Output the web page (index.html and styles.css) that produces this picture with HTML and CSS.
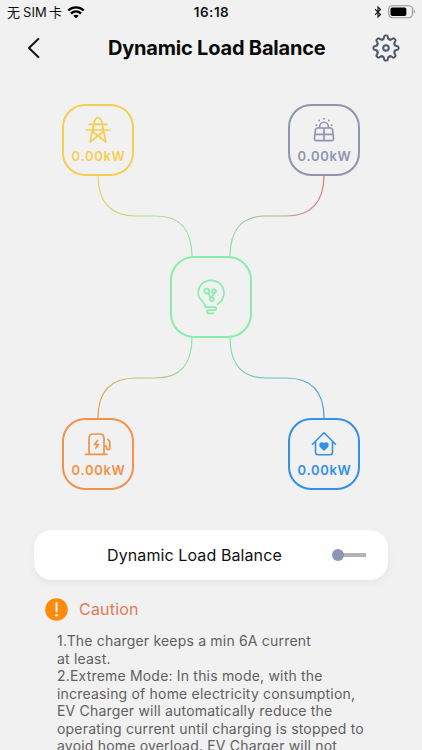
FILE: index.html
```html
<!DOCTYPE html>
<html lang="en">
<head>
    <meta charset="UTF-8">
    <meta name="viewport" content="width=device-width, initial-scale=1.0">
    <title>Dynamic Load Balance</title>
    <link rel="stylesheet" href="styles.css">
</head>
<body>
    <div class="status-bar">
        <div class="status-left">
            <span class="carrier">无<span class="sim">SIM</span>卡</span>
            <svg class="wifi" width="18" height="13" viewBox="0 0 18 13" fill="none" stroke="#000" stroke-width="2.4">
                <path d="M1.2 4.5C5.6 .3 12.4 .3 16.8 4.5"/>
                <path d="M4 7.5c2.900-2.700 7.100-2.700 10 0"/>
                <path d="M9 12.300L6.300 9.700c1.500-1.300 3.900-1.300 5.400 0z" fill="#000" stroke="none"/>
            </svg>
        </div>
        <span class="time">16:18</span>
        <div class="status-right">
            <svg width="8" height="12" viewBox="0 0 8 12" fill="none" stroke="#111" stroke-width="1.1">
                <path d="M1 3.200l5.500 5.300L4 11V1l2.500 2.500L1 8.800"/>
            </svg>
            <svg width="28" height="14" viewBox="0 0 28 14">
                <rect x=".7" y=".7" width="23.800" height="12" rx="3.600" fill="none" stroke="#999" stroke-width="1.100"/>
                <rect x="2.500" y="2.400" width="15.800" height="8.600" rx="1.800" fill="#000"/>
                <path d="M25.700 4.600c1.700.7 1.700 3.500 0 4.200z" fill="#999"/>
            </svg>
        </div>
    </div>

    <header>
        <svg class="back" width="14" height="22" viewBox="0 0 14 22" fill="none" stroke="#111" stroke-width="1.900" stroke-linecap="round" stroke-linejoin="round">
            <path d="M11.500 1.800L2 11l9.500 9.200"/>
        </svg>
        <h1>Dynamic Load Balance</h1>
        <svg class="gear" width="30" height="30" viewBox="-15 -15 30 30" fill="none" stroke="#4d5a6b" stroke-width="2" stroke-linecap="round">
            <defs>
                <path id="tooth" d="M-3.600 -8.700C-2.500 -8.300 -2.100 -9.600 -2 -10.600Q-1.800 -12.500 -.8 -12.500H.8Q1.800 -12.500 2 -10.600C2.100 -9.600 2.500 -8.300 3.600 -8.700"/>
            </defs>
            <use href="#tooth"/>
            <use href="#tooth" transform="rotate(45)"/>
            <use href="#tooth" transform="rotate(90)"/>
            <use href="#tooth" transform="rotate(135)"/>
            <use href="#tooth" transform="rotate(180)"/>
            <use href="#tooth" transform="rotate(225)"/>
            <use href="#tooth" transform="rotate(270)"/>
            <use href="#tooth" transform="rotate(315)"/>
            <circle r="2.800"/>
        </svg>
    </header>

    <main>
        <section class="diagram">
            <svg class="wires" width="422" height="458" viewBox="0 72 422 458" fill="none" stroke-width="1.200">
                <defs>
                    <linearGradient id="g1" gradientUnits="userSpaceOnUse" x1="98" y1="175" x2="192" y2="257"><stop offset="0" stop-color="#efcf62"/><stop offset="1" stop-color="#83eaa4"/></linearGradient>
                    <linearGradient id="g2" gradientUnits="userSpaceOnUse" x1="324" y1="175" x2="230" y2="257"><stop offset="0" stop-color="#e2748c"/><stop offset="1" stop-color="#83eaa4"/></linearGradient>
                    <linearGradient id="g3" gradientUnits="userSpaceOnUse" x1="98" y1="418" x2="192" y2="337"><stop offset="0" stop-color="#ef9a50"/><stop offset="1" stop-color="#83eaa4"/></linearGradient>
                    <linearGradient id="g4" gradientUnits="userSpaceOnUse" x1="324" y1="418" x2="230" y2="337"><stop offset="0" stop-color="#4298df"/><stop offset="1" stop-color="#83eaa4"/></linearGradient>
                </defs>
                <path stroke="url(#g1)" d="M98 175C98 201 110 216 136 216H156C182 216 192 231 192 257"/>
                <path stroke="url(#g2)" d="M324 175C324 201 312 216 286 216H266C240 216 230 231 230 257"/>
                <path stroke="url(#g3)" d="M98 418C98 392 110 378 136 378H156C182 378 192 363 192 337"/>
                <path stroke="url(#g4)" d="M324 418C324 392 312 378 286 378H266C240 378 230 363 230 337"/>
            </svg>

            <div class="node grid">
                <svg width="26" height="28" viewBox="0 0 26 28" fill="none" stroke="currentColor" stroke-width="1.700" stroke-linecap="round" stroke-linejoin="round">
                    <path d="M5 26L9.500 5Q10.500 1.500 13 1.500T16.500 5L21 26L7.500 15.500L9 8H17L18.500 15.500L5 26M4 8.300H22M1.200 14H24.800"/>
                </svg>
                <span>0.00kW</span>
            </div>
            <div class="node solar">
                <svg width="26" height="28" viewBox="0 0 26 28" fill="none" stroke="currentColor" stroke-width="1.700" stroke-linecap="round" stroke-linejoin="round">
                    <path d="M6.500 12H19.500Q21 12 21.500 13.500L22.500 22Q22.700 24.700 20.500 24.700H5.500Q3.300 24.700 3.500 22L4.500 13.500Q5 12 6.500 12zM13 12V24.700M4 18.300H22M8.500 11.500C8.500 4.500 17.500 4.500 17.500 11.500"/>
                    <path d="M13 2.700V3M8.200 4.300V4.600M17.800 4.300V4.600M5.300 9V9.200M20.700 9V9.200"/>
                </svg>
                <span>0.00kW</span>
            </div>
            <div class="node center">
                <svg width="28" height="36" viewBox="0 0 28 36" fill="none" stroke="currentColor" stroke-width="1.700" stroke-linecap="round">
                    <path d="M20.500 25.400Q27 20.700 27 14C27 6.500 21.200 1.300 14 1.300S1.200 6.500 1.200 14Q1.200 18.500 5.200 22Q8.300 25 8.600 28.200H17.800Q19.400 28.200 19.400 29.700T17.800 31.200H12.200Q10 31.200 10 32.700T12 34.300H16.500"/>
                    <circle cx="9.800" cy="12.200" r="2.500"/>
                    <circle cx="17" cy="12.200" r="1.900"/>
                    <circle cx="14.800" cy="20.200" r="1.900"/>
                    <path d="M11 14.500L14 18.400M16.600 14.200L15.300 18.200"/>
                </svg>
            </div>
            <div class="node charger">
                <svg width="28" height="28" viewBox="0 0 28 28" fill="none" stroke="currentColor" stroke-width="1.700" stroke-linecap="round" stroke-linejoin="round">
                    <path d="M1.500 24.300H23M5 24V8.500Q5 4 9.500 4H15.500Q20 4 20 8.500V24M20.500 15.500Q22.500 15.500 22.500 17.500T24.200 19.600T25.800 17.500V12.500Q25.800 10.500 24 9.500"/>
                    <path d="M13.500 10.500L10.500 14.500H14.500L11.800 18" />
                </svg>
                <span>0.00kW</span>
            </div>
            <div class="node home">
                <svg width="26" height="28" viewBox="0 0 26 28" fill="none" stroke="currentColor" stroke-width="1.600" stroke-linecap="round" stroke-linejoin="round">
                    <path d="M1.500 14.300L13 2.700L24.500 14.300M4.500 12V22Q4.500 24.700 7 24.700H19Q21.500 24.700 21.500 22V12"/>
                    <path fill="currentColor" stroke="none" d="M13 21L9.300 17.500C7.300 15.300 8.500 12.200 10.700 12.200Q12 12.200 13 12.900Q14 12.200 15.300 12.200C17.500 12.200 18.700 15.300 16.700 17.500z"/>
                </svg>
                <span>0.00kW</span>
            </div>
        </section>

        <section class="switch-card">
            <span class="switch-label">Dynamic Load Balance</span>
            <span class="switch"></span>
        </section>

        <section class="caution">
            <div class="caution-title">
                <svg width="23" height="23" viewBox="0 0 23 23">
                    <circle cx="11.500" cy="11.500" r="11.300" fill="#ff8a0c"/>
                    <path d="M11.500 5V13.500" stroke="#fff" stroke-width="2" stroke-linecap="round"/>
                    <circle cx="11.500" cy="17.200" r="1.300" fill="#fff"/>
                </svg>
                <h2>Caution</h2>
            </div>
            <p>1.The charger keeps a min 6A current<br>at least.<br>2.Extreme Mode: In this mode, with the<br>increasing of home electricity consumption,<br>EV Charger will automatically reduce the<br>operating current until charging is stopped to<br>avoid home overload. EV Charger will not</p>
        </section>
    </main>
</body>
</html>
```
FILE: styles.css
```css
* {
    box-sizing: border-box;
}

body {
    font-family: Inter, "Noto Sans CJK SC", sans-serif;
    margin: 0;
    height: 750px;
    overflow: hidden;
    background-color: #f1f1f1;
    color: #111;
}

svg {
    display: block;
    flex-shrink: 0;
}

.status-bar {
    display: grid;
    grid-template-columns: 1fr auto 1fr;
    align-items: center;
    height: 24px;
    padding: 0 6px 0 7px;
}

.status-left, .status-right {
    display: flex;
    align-items: center;
}

.status-left {
    gap: 5px;
}

.status-right {
    justify-content: flex-end;
    gap: 6px;
}

.carrier {
    font-size: 13px;
    line-height: 24px;
    white-space: nowrap;
}

.sim {
    margin: 0 2px 0 3px;
    letter-spacing: 0.1px;
}

.time {
    font-size: 13.5px;
    font-weight: 600;
    letter-spacing: 0.5px;
}

header {
    display: flex;
    align-items: center;
    height: 47px;
    padding: 0 21px 0 27px;
}

h1 {
    margin: 0 auto 0 67px;
    font-size: 20px;
    font-weight: 700;
    letter-spacing: -0.2px;
    white-space: nowrap;
    color: #0a0a0a;
}

.diagram {
    position: relative;
    height: 458px;
    margin-top: 1px;
}

.node {
    position: absolute;
    display: flex;
    flex-direction: column;
    align-items: center;
    width: 72px;
    height: 72px;
    padding-top: 10px;
    border: 2px solid;
    border-radius: 23px;
}

.node span {
    font-size: 13px;
    font-weight: 600;
    line-height: 18px;
    margin-top: 3px;
    margin-right: -1px;
    letter-spacing: 0.7px;
}

.grid {
    left: 62px;
    top: 32px;
    color: #f5cf55;
}

.solar {
    left: 288px;
    top: 32px;
    color: #9094b0;
}

.charger {
    left: 62px;
    top: 346px;
    color: #f3924a;
}

.home {
    left: 288px;
    top: 346px;
    color: #3490e6;
}

.center {
    left: 170px;
    top: 184px;
    width: 82px;
    height: 82px;
    padding: 0;
    justify-content: center;
    border-radius: 24px;
    color: #88eea9;
}

.switch-card {
    display: flex;
    align-items: center;
    height: 50px;
    margin: 0 34px;
    padding: 0 22px 0 73px;
    justify-content: space-between;
    border-radius: 18px;
    background: white;
    box-shadow: 0 3px 8px rgba(0, 0, 0, 0.05);
}

.switch-label {
    font-size: 16px;
    letter-spacing: 0.1px;
}

.switch {
    display: flex;
    align-items: center;
    width: 34px;
    height: 12px;
    background: linear-gradient(#b4b4b8, #b4b4b8) right center / 30px 4px no-repeat;
    border-radius: 2px;
}

.switch::before {
    content: "";
    width: 12px;
    height: 12px;
    border-radius: 50%;
    background: #8d96b2;
}

.caution {
    padding: 17px 20px 0 45px;
}

.caution-title {
    display: flex;
    align-items: center;
    gap: 11px;
    height: 24px;
}

h2 {
    margin: 0;
    font-size: 16px;
    font-weight: 400;
    letter-spacing: 0.2px;
    color: #e27a56;
}

.caution p {
    margin: 11px 0 0 12px;
    font-size: 14px;
    line-height: 17.5px;
    letter-spacing: 0.19px;
    white-space: nowrap;
    color: #606060;
}
```
